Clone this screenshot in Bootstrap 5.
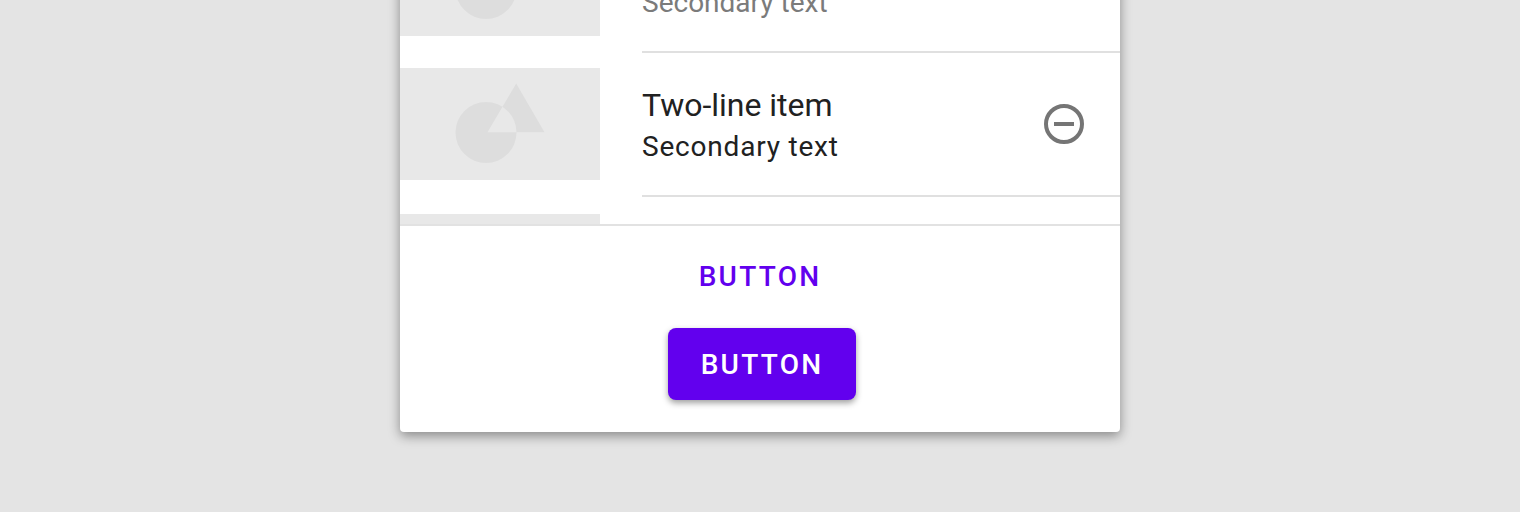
<!DOCTYPE html>
<html lang="en">
<head>
<meta charset="utf-8">
<meta name="viewport" content="width=device-width, initial-scale=1">
<title>Two-line list</title>
<link href="https://cdn.jsdelivr.net/npm/bootstrap@5.3.0/dist/css/bootstrap.min.css" rel="stylesheet">
<style>
  body { background: #e4e4e4; font-family: Roboto, sans-serif; height: 512px; color: #212121; display: flow-root; }
  .panel { width: 720px; height: 456px; margin-top: -24px; padding-top: 24px; border-radius: 4px; box-shadow: 0 4px 12px rgba(0,0,0,.4); }
  .items { height: 226px; border-bottom: 2px solid #e2e2e2; }
  .item { height: 144px; }
  .item-first { height: 53px; }
  .item-last { height: 27px; }
  .thumb { width: 200px; height: 112px; background: #e8e8e8; margin-bottom: 17px; }
  .item-last .thumb { margin: 17px 0 0; }
  .item-body { margin-left: 42px; border-bottom: 2px solid #e0e0e0; padding-right: 36px; height: 144px; }
  .lines { padding-top: 6px; }
  .title { font-size: 32px; line-height: 39px; letter-spacing: -.02px; }
  .secondary { font-size: 28px; line-height: 43px; letter-spacing: .8px; }
  .muted { color: #7b7b7b; letter-spacing: 0; }
  .btn.action { font-size: 28px; font-weight: 500; line-height: 40px; letter-spacing: 2.25px; color: #6200ee; width: 188px; height: 72px; padding: 1px 0 0; border: 0; border-radius: 8px; }
  .btn.filled { background: #6200ee; color: #fff; box-shadow: 0 3px 6px rgba(0,0,0,.38); }
  .actions { padding-top: 14px; }
</style>
<script src="https://cdn.jsdelivr.net/npm/bootstrap@5.3.0/dist/js/bootstrap.bundle.min.js"></script>
</head>
<body class="overflow-hidden">
<svg class="d-none">
  <symbol id="shapes" viewBox="0 0 200 112">
    <path fill="#ddd" fill-rule="evenodd" d="M55.5 64.5a30.5 30.5 0 1 0 61 0a30.5 30.5 0 1 0 -61 0zM116.2 15.5L144.5 64.2H87.5z"/>
  </symbol>
</svg>
<main class="panel bg-white mx-auto d-flex flex-column">
  <div class="items overflow-hidden">
    <div class="item-first d-flex align-items-end">
      <div class="thumb flex-shrink-0"><svg width="200" height="112" class="d-block"><use href="#shapes"/></svg></div>
      <div class="item-body flex-grow-1 d-flex align-items-center">
        <div class="lines"><div class="title">Two-line item</div><div class="secondary muted">Secondary text</div></div>
      </div>
    </div>
    <div class="item d-flex align-items-end">
      <div class="thumb flex-shrink-0"><svg width="200" height="112" class="d-block"><use href="#shapes"/></svg></div>
      <div class="item-body flex-grow-1 d-flex align-items-center justify-content-between">
        <div class="lines"><div class="title">Two-line item</div><div class="secondary">Secondary text</div></div>
        <svg width="40" height="40" viewBox="0 0 40 40" fill="none" stroke="#757575" stroke-width="4" aria-label="Remove"><circle cx="20" cy="20" r="18"/><path d="M10 20h20"/></svg>
      </div>
    </div>
    <div class="item-last overflow-hidden"><div class="thumb"></div></div>
  </div>
  <div class="actions d-flex flex-column align-items-center gap-3 ps-1">
    <button type="button" class="btn action me-1">BUTTON</button>
    <button type="button" class="btn action filled">BUTTON</button>
  </div>
</main>
</body>
</html>
